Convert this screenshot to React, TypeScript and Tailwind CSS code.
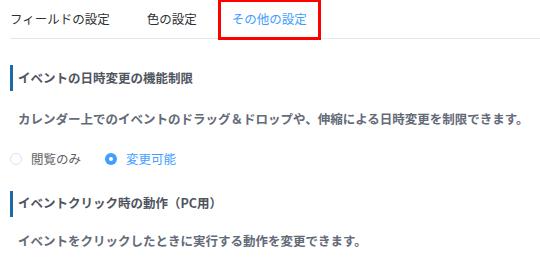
import React from "react";

const font = { fontFamily: '"Noto Sans CJK JP", "Noto Sans", sans-serif' };

function SectionTitle({ children }: { children: React.ReactNode }) {
  return (
    <div className="flex h-[26px] items-center border-l-[3px] border-[#1f6aa5] pl-[5px] text-[12.5px] font-bold text-[#4f5560]">
      {children}
    </div>
  );
}

function Radio({ label, checked }: { label: string; checked?: boolean }) {
  return (
    <label className="flex items-center gap-[9px]">
      {checked ? (
        <span className="flex h-[12px] w-[12px] items-center justify-center rounded-full bg-[#409eff]">
          <span className="h-[4px] w-[4px] rounded-full bg-white" />
        </span>
      ) : (
        <span className="h-[12px] w-[12px] rounded-full border border-[#dcdfe6] bg-white" />
      )}
      <span className={checked ? "text-[#409eff]" : "text-[#606266]"}>{label}</span>
    </label>
  );
}

export default function App() {
  return (
    <div className="h-[259px] w-[540px] overflow-hidden bg-white pl-[10px]" style={font}>
      {/* tabs */}
      <div className="flex h-[39px] items-center border-b border-[#e4e7ed] text-[12.5px] text-[#303133]">
        <div>フィールドの設定</div>
        <div className="ml-[37px]">色の設定</div>
        <div className="ml-[21px] flex h-[41px] items-center border-[3px] border-[#ff0000] px-[11px] text-[#409eff]">
          その他の設定
        </div>
      </div>

      <div className="mt-[26px] flex flex-col">
        <SectionTitle>イベントの日時変更の機能制限</SectionTitle>
        <p className="mt-[19px] pl-[8px] text-[12.5px] font-bold text-[#646b78]">
          カレンダー上でのイベントのドラッグ＆ドロップや、伸縮による日時変更を制限できます。
        </p>
        <div className="mt-[21px] flex items-center gap-[24px] text-[12.5px]">
          <Radio label="閲覧のみ" />
          <Radio label="変更可能" checked />
        </div>
        <div className="mt-[22px]">
          <SectionTitle>イベントクリック時の動作（PC用）</SectionTitle>
        </div>
        <p className="mt-[15px] pl-[8px] text-[12.5px] font-bold text-[#646b78]">
          イベントをクリックしたときに実行する動作を変更できます。
        </p>
      </div>
    </div>
  );
}
